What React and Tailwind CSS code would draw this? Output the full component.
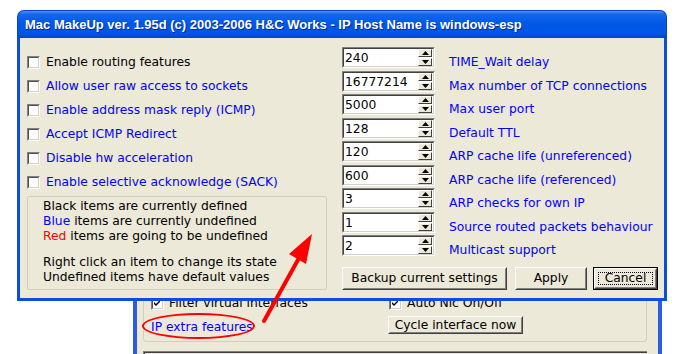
import React from "react";

function Check({ checked }) {
  return (
    <div className="w-[13px] h-[13px] shrink-0 border border-t-[#808080] border-l-[#808080] border-r-white border-b-white">
      <div className="w-full h-full border border-t-[#505050] border-l-[#505050] border-r-[#d4d0c8] border-b-[#d4d0c8] bg-white flex items-center justify-center">
        {checked && (
          <svg width="7" height="7" viewBox="0 0 7 7">
            <path d="M0 2 L2 4 L6 0 L6 2 L2 6 L0 4 Z" fill="#000" />
          </svg>
        )}
      </div>
    </div>
  );
}

function SpinBtn({ up }) {
  return (
    <div className="h-[8px] bg-[#ece9d8] border border-t-white border-l-white border-r-[#404040] border-b-[#404040] flex items-center justify-center">
      <svg width="7" height="4" viewBox="0 0 7 4">
        {up ? <path d="M3.5 0 L7 4 L0 4 Z" fill="#000" /> : <path d="M0 0 L7 0 L3.5 4 Z" fill="#000" />}
      </svg>
    </div>
  );
}

function Spin({ value, label }) {
  return (
    <div className="h-[23.5px] flex items-start">
      <div className="w-[93px] h-[21px] shrink-0 border border-t-[#808080] border-l-[#808080] border-r-white border-b-white">
        <div className="w-full h-full flex border border-t-[#404040] border-l-[#404040] border-r-[#d4d0c8] border-b-[#d4d0c8] bg-white">
          <span className="flex-1 pl-[1px] leading-[18px] text-black">{value}</span>
          <div className="w-[15px] flex flex-col justify-center gap-[1px] pr-[1px]">
            <SpinBtn up />
            <SpinBtn />
          </div>
        </div>
      </div>
      <span className="ml-[14px] pt-[8px] leading-[15px] text-[#0000ff] whitespace-nowrap">{label}</span>
    </div>
  );
}

function Btn({ children, w, isDefault }) {
  const inner = (
    <div className="w-full h-full border border-t-white border-l-white border-r-[#404040] border-b-[#404040]">
      <div className="relative w-full h-full border border-t-[#ece9d8] border-l-[#ece9d8] border-r-[#808080] border-b-[#808080] flex items-center justify-center bg-[#ece9d8]">
        {isDefault && <div className="absolute inset-[2px] border border-dotted border-black" />}
        <span className="leading-[15px]">{children}</span>
      </div>
    </div>
  );
  if (isDefault) {
    return <div className={`${w} h-[23px] border border-black`}>{inner}</div>;
  }
  return <div className={`${w} h-[23px]`}>{inner}</div>;
}

const leftItems = [
  { t: "Enable routing features", blue: false },
  { t: "Allow user raw access to sockets", blue: true },
  { t: "Enable address mask reply (ICMP)", blue: true },
  { t: "Accept ICMP Redirect", blue: true },
  { t: "Disable hw acceleration", blue: true },
  { t: "Enable selective acknowledge (SACK)", blue: true },
];

const spins = [
  ["240", "TIME_Wait delay"],
  ["16777214", "Max number of TCP connections"],
  ["5000", "Max user port"],
  ["128", "Default TTL"],
  ["120", "ARP cache life (unreferenced)"],
  ["600", "ARP cache life (referenced)"],
  ["3", "ARP checks for own IP"],
  ["1", "Source routed packets behaviour"],
  ["2", "Multicast support"],
];

export default function App() {
  return (
    <div className="relative w-[680px] h-[354px] bg-white overflow-hidden font-['DejaVu_Sans',sans-serif] text-[12.3px] text-black">
      {/* background window */}
      <div className="absolute left-[133px] top-[250px] w-[529px] h-[130px] border-x-[4px] border-l-[#2a5ce6] border-r-[#2a5ce6] bg-[#ece9d8] z-0">
        <div className="ml-[6px] mt-[20px] w-[504px] h-[72px] border border-[#d0d0bf] rounded-[3px] flex pt-[24px] pl-[7px]">
          <div className="w-[237px] flex flex-col">
            <div className="h-[16px] flex items-center gap-[5px]">
              <Check checked />
              <span>Filter virtual interfaces</span>
            </div>
            <span className="mt-[9px] leading-[15px] text-[#0000ff]">IP extra features</span>
          </div>
          <div className="flex flex-col">
            <div className="h-[16px] flex items-center gap-[5px] ml-[1px]">
              <Check checked />
              <span>Auto Nic On/Off</span>
            </div>
            <div className="mt-[5px] w-[135px] h-[18px] border border-t-white border-l-white border-r-[#404040] border-b-[#404040]">
              <div className="w-full h-full border border-t-[#ece9d8] border-l-[#ece9d8] border-r-[#808080] border-b-[#808080] flex items-center justify-center">
                <span className="leading-[14px]">Cycle interface now</span>
              </div>
            </div>
          </div>
        </div>
        <div className="ml-[6px] mt-[9px] w-[504px] h-[20px] border-t border-l border-t-[#808080] border-l-[#808080]">
          <div className="w-full h-full border-t border-l border-t-[#404040] border-l-[#404040]" />
        </div>
      </div>

      {/* front window */}
      <div className="absolute left-[17px] top-[10px] w-[650px] h-[291px] flex flex-col z-10">
        <div className="h-[28px] shrink-0 rounded-t-[7px] bg-[linear-gradient(to_bottom,#4a93ff_0%,#1467f0_12%,#0058e6_45%,#0055e4_85%,#0045c8_100%)] border-x border-t border-[#0a3fc8] flex items-center pl-[7px]">
          <span className="text-white font-bold font-['Liberation_Sans',sans-serif] text-[13px] whitespace-nowrap [text-shadow:1px_1px_0_#0a2a8a]">
            Mac MakeUp ver. 1.95d (c) 2003-2006 H&amp;C Works - IP Host Name is windows-esp
          </span>
        </div>
        <div className="flex-1 flex border-x-[3px] border-b-[3px] border-[#0a4ee0]">
          <div className="flex-1 bg-[#ece9d8] flex">
            {/* left column */}
            <div className="w-[300px] ml-[7px] pt-[12px] flex flex-col">
              {leftItems.map((it) => (
                <div key={it.t} className="h-[24px] flex items-center gap-[6px]">
                  <Check />
                  <span className={it.blue ? "text-[#0000ff] whitespace-nowrap" : "text-black whitespace-nowrap"}>{it.t}</span>
                </div>
              ))}
              <div className="mt-[2px] h-[94px] border border-[#d0d0bf] rounded-[2px] pl-[15px] pt-[2px] leading-[15px]">
                <div>Black items are currently defined</div>
                <div>
                  <span className="text-[#0000ff]">Blue</span> items are currently undefined
                </div>
                <div>
                  <span className="text-[#ff0000]">Red</span> items are going to be undefined
                </div>
                <div className="mt-[11px]">Right click an item to change its state</div>
                <div>Undefined items have default values</div>
              </div>
            </div>
            {/* right column */}
            <div className="ml-[15px] pt-[9px] flex flex-col">
              {spins.map(([v, l]) => (
                <Spin key={l} value={v} label={l} />
              ))}
              <div className="mt-[8.5px] flex">
                <Btn w="w-[165px]">Backup current settings</Btn>
                <div className="ml-[8px]">
                  <Btn w="w-[72px]">Apply</Btn>
                </div>
                <div className="ml-[6px]">
                  <Btn w="w-[65px]" isDefault>Cancel</Btn>
                </div>
              </div>
            </div>
          </div>
        </div>
      </div>

      {/* red ellipse annotation */}
      <div className="absolute left-[142px] top-[313px] w-[113px] h-[26px] rounded-[50%] border-2 border-[#ff0000] z-20" />

      {/* red arrow annotation */}
      <svg className="absolute left-0 top-0 z-20 pointer-events-none" width="680" height="354" viewBox="0 0 680 354">
        <line x1="264" y1="321" x2="299" y2="258" stroke="#ff0000" strokeWidth="4" strokeLinecap="round" />
        <path d="M312 234 L289 254 L306 264 Z" fill="#ff0000" />
      </svg>
    </div>
  );
}
